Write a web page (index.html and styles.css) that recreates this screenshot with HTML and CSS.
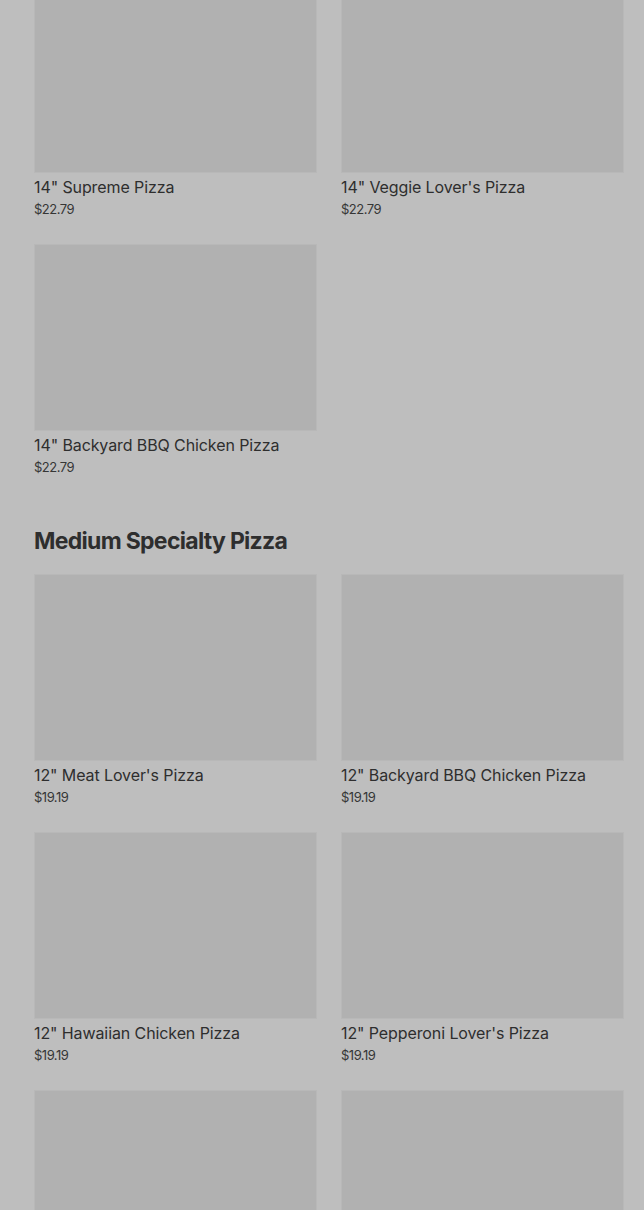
FILE: index.html
```html
<!DOCTYPE html>
<html>
<head>
<meta charset="utf-8">
<link rel="stylesheet" href="styles.css">
</head>
<body>
<div class="page">
  <section class="section">
    <div class="grid">
      <div class="card"><div class="img"></div><div class="name">14" Supreme Pizza</div><div class="price">$22.79</div></div>
      <div class="card"><div class="img"></div><div class="name">14" Veggie Lover's Pizza</div><div class="price">$22.79</div></div>
      <div class="card"><div class="img"></div><div class="name">14" Backyard BBQ Chicken Pizza</div><div class="price">$22.79</div></div>
    </div>
  </section>
  <section class="section">
    <h2 class="heading">Medium Specialty Pizza</h2>
    <div class="grid">
      <div class="card"><div class="img"></div><div class="name">12" Meat Lover's Pizza</div><div class="price">$19.19</div></div>
      <div class="card"><div class="img"></div><div class="name">12" Backyard BBQ Chicken Pizza</div><div class="price">$19.19</div></div>
      <div class="card"><div class="img"></div><div class="name">12" Hawaiian Chicken Pizza</div><div class="price">$19.19</div></div>
      <div class="card"><div class="img"></div><div class="name">12" Pepperoni Lover's Pizza</div><div class="price">$19.19</div></div>
      <div class="card"><div class="img"></div><div class="name"></div><div class="price"></div></div>
      <div class="card"><div class="img"></div><div class="name"></div><div class="price"></div></div>
    </div>
  </section>
</div>
</body>
</html>
```

FILE: styles.css
```css
html, body {
  margin: 0;
  padding: 0;
  background: #bebebe;
  overflow: hidden;
}
body {
  height: 1210px;
  font-family: Inter, "Liberation Sans", sans-serif;
  color: #333333;
}
.page {
  margin-top: -14px;
  padding: 0 20px 0 34px;
  display: flex;
  flex-direction: column;
  gap: 48px;
}
.grid {
  display: grid;
  grid-template-columns: 283px 283px;
  column-gap: 24px;
  row-gap: 25px;
}
.card {
  display: flex;
  flex-direction: column;
}
.img {
  height: 187px;
  box-sizing: border-box;
  background: #b1b1b1;
  border: 1px solid #b8b8b8;
}
.name {
  margin-top: 4px;
  font-size: 16px;
  line-height: 20px;
  height: 20px;
  font-weight: 400;
  color: #2e2e2e;
  letter-spacing: -0.1px;
}
.price {
  margin-top: 2px;
  font-size: 13px;
  line-height: 20px;
  height: 20px;
  color: #363636;
  letter-spacing: -0.5px;
}
.heading {
  margin: 0 0 17px 0;
  font-size: 23px;
  line-height: 32px;
  font-weight: 700;
  color: #2e2e2e;
  letter-spacing: -0.7px;
}
```
